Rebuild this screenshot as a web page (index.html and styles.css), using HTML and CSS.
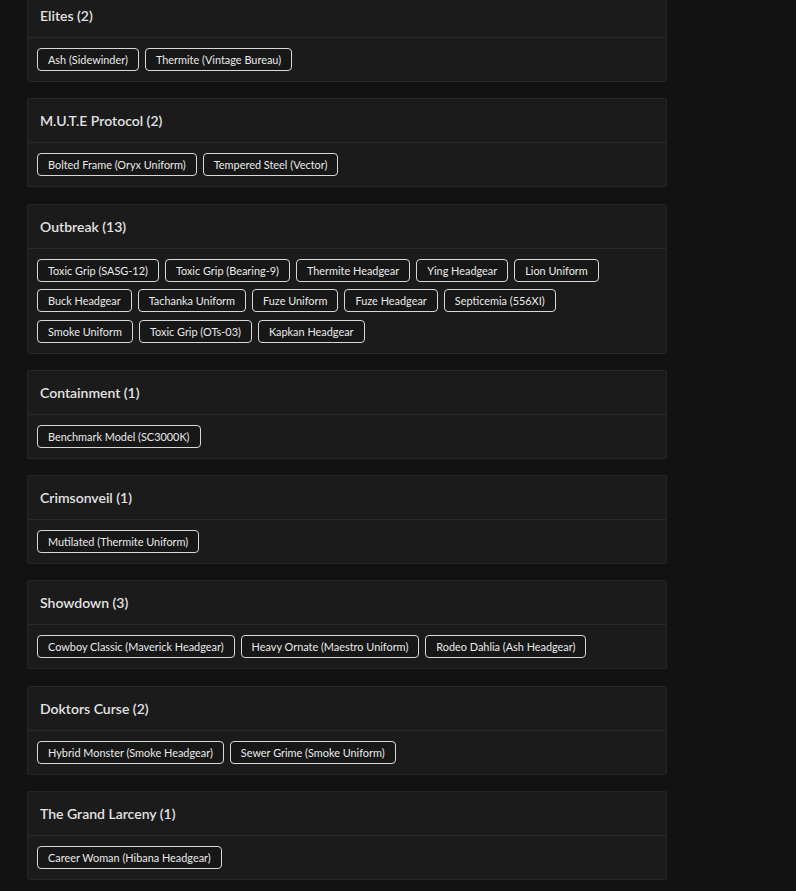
FILE: index.html
```html
<!DOCTYPE html>
<html lang="en">
<head>
  <meta charset="UTF-8" />
  <meta name="viewport" content="width=device-width, initial-scale=1.0"/>
  <title>Event Collections</title>
  <link rel="stylesheet" href="styles.css">
</head>
<body>

  <div id="collections">

    <div class="event-card">
      <div class="event-header">Elites (2)</div>
      <div class="event-items">
        <span class="item">Ash (Sidewinder)</span>
        <span class="item">Thermite (Vintage Bureau)</span>
      </div>
    </div>

    <div class="event-card">
      <div class="event-header">M.U.T.E Protocol (2)</div>
      <div class="event-items">
        <span class="item">Bolted Frame (Oryx Uniform)</span>
        <span class="item">Tempered Steel (Vector)</span>
      </div>
    </div>

    <div class="event-card">
      <div class="event-header">Outbreak (13)</div>
      <div class="event-items">
        <span class="item">Toxic Grip (SASG-12)</span>
        <span class="item">Toxic Grip (Bearing-9)</span>
        <span class="item">Thermite Headgear</span>
        <span class="item">Ying Headgear</span>
        <span class="item">Lion Uniform</span>
        <span class="item">Buck Headgear</span>
        <span class="item">Tachanka Uniform</span>
        <span class="item">Fuze Uniform</span>
        <span class="item">Fuze Headgear</span>
        <span class="item">Septicemia (556XI)</span>
        <span class="item">Smoke Uniform</span>
        <span class="item">Toxic Grip (OTs-03)</span>
        <span class="item">Kapkan Headgear</span>
      </div>
    </div>

    <div class="event-card">
      <div class="event-header">Containment (1)</div>
      <div class="event-items">
        <span class="item">Benchmark Model (SC3000K)</span>
      </div>
    </div>

    <div class="event-card">
      <div class="event-header">Crimsonveil (1)</div>
      <div class="event-items">
        <span class="item">Mutilated (Thermite Uniform)</span>
      </div>
    </div>

    <div class="event-card">
      <div class="event-header">Showdown (3)</div>
      <div class="event-items">
        <span class="item">Cowboy Classic (Maverick Headgear)</span>
        <span class="item">Heavy Ornate (Maestro Uniform)</span>
        <span class="item">Rodeo Dahlia (Ash Headgear)</span>
      </div>
    </div>

    <div class="event-card">
      <div class="event-header">Doktors Curse (2)</div>
      <div class="event-items">
        <span class="item">Hybrid Monster (Smoke Headgear)</span>
        <span class="item">Sewer Grime (Smoke Uniform)</span>
      </div>
    </div>

    <div class="event-card">
      <div class="event-header">The Grand Larceny (1)</div>
      <div class="event-items">
        <span class="item">Career Woman (Hibana Headgear)</span>
      </div>
    </div>

  </div>

</body>
</html>
```

FILE: styles.css
```css
body {
  margin: 0;
  font-family: Lato, "Open Sans", sans-serif;
  background-color: #121212;
  color: #e8e8e8;
  overflow: hidden;
}

#collections {
  width: 640px;
  margin-top: -7px;
  margin-left: 27px;
  display: flex;
  flex-direction: column;
  gap: 16.3px;
}

.event-card {
  background-color: #1b1b1b;
  border: 1px solid #262626;
  border-radius: 2px;
}

.event-header {
  padding: 12px 12px;
  font-size: 14px;
  line-height: 19px;
  font-weight: 600;
  color: #e2e2e2;
  border-bottom: 1px solid #292929;
}

.event-items {
  display: flex;
  flex-wrap: wrap;
  gap: 7.5px 6px;
  padding: 10px 9px;
}

.item {
  font-size: 10.9px;
  line-height: 15px;
  padding: 3px 10px;
  border: 1px solid #d8d8d8;
  border-radius: 4px;
  color: #eaeaea;
  background-color: #171717;
}
```
